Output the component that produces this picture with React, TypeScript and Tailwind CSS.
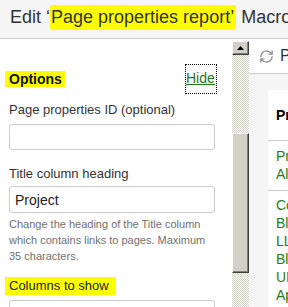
import { RefreshCw } from "lucide-react";

function Checker({ className }: { className: string }) {
  return (
    <div
      className={`bg-[repeating-conic-gradient(#d4d0c8_0_25%,#ffffff_0_50%)] bg-[length:2px_2px] ${className}`}
    />
  );
}

export default function App() {
  return (
    <div className="w-[288px] h-[307px] overflow-hidden bg-white font-['Liberation_Sans',Arial,sans-serif] text-[#333333]">
      <div className="h-[39px] border-b border-[#cccccc] bg-[#f5f5f5] pl-[10px] pt-[7px] text-[18px] leading-[20px] whitespace-nowrap overflow-hidden">
        Edit ‘
        <span className="bg-[#ffff00] pt-[2px] pb-[3px] pl-[1px] pr-[2px] rounded-[2px]">
          Page properties report’
        </span>{" "}
        Macro
      </div>
      <div className="flex h-[268px]">
        <div className="w-[232px] shrink-0 pl-[9px]">
          <div className="flex justify-between items-start mt-[25px] pr-[15px]">
            <div className="mt-[7px] -ml-[4px] w-fit pl-[4px] pr-[3px] bg-[#ffff00] text-[14px] leading-[16px] font-bold text-[#111111]">
              Options
            </div>
            <div className="w-[32px] h-[30px] border border-dotted border-black pt-[5px] text-[14px] leading-[16px] text-[#1f7a1a] underline">
              Hide
            </div>
          </div>
          <div className="mt-[8px] text-[13px] leading-[16px]">Page properties ID (optional)</div>
          <div className="mt-[6px] h-[26px] w-[206px] border border-[#cccccc] rounded-[3px] bg-white" />
          <div className="mt-[16px] text-[13px] leading-[16px]">Title column heading</div>
          <div className="mt-[4px] h-[27px] w-[206px] border border-[#cccccc] rounded-[3px] bg-white pl-[5px] pt-[5px] text-[14px] leading-[16px] text-[#222222]">
            Project
          </div>
          <div className="mt-[3px] text-[11px] leading-[16px] text-[#707070] whitespace-nowrap">
            Change the heading of the Title column
            <br />
            which contains links to pages. Maximum
            <br />
            35 characters.
          </div>
          <div className="mt-[13px] -ml-[4px] w-fit pl-[4px] pr-[7px] bg-[#ffff00] text-[13px] leading-[18px] text-[#222222]">
            Columns to show
          </div>
          <div className="mt-[5px] h-[26px] w-[206px] border border-[#cccccc] rounded-[3px] bg-white" />
        </div>
        <div className="w-[17px] shrink-0 flex flex-col pt-[2px]">
          <div className="h-[14px] bg-[#d4d0c8] border border-t-white border-l-white border-r-[#404040] border-b-[#404040] shadow-[inset_-1px_-1px_#808080] flex items-center justify-center">
            <svg width="7" height="4" viewBox="0 0 7 4">
              <polygon points="3.5,0 7,4 0,4" fill="#000000" />
            </svg>
          </div>
          <Checker className="h-[78px]" />
          <div className="h-[140px] bg-[#d4d0c8] border border-t-white border-l-white border-r-[#404040] border-b-[#404040] shadow-[inset_-1px_-1px_#808080]" />
          <Checker className="flex-1" />
        </div>
        <div className="flex-1 min-w-0 flex flex-col bg-[#f5f5f5] overflow-hidden">
          <div className="h-[35px] shrink-0 bg-white border-b border-[#cccccc] flex items-center pl-[10px] gap-[6px] whitespace-nowrap">
            <RefreshCw size={15} color="#8c8c8c" strokeWidth={2} className="shrink-0" />
            <span className="text-[16px] text-[#333333]">Preview</span>
          </div>
          <div className="ml-[19px] mt-[16px] flex-1 bg-white text-[14px] leading-[18px] whitespace-nowrap overflow-hidden">
            <div className="pt-[16px] pb-[16px] pl-[8px] font-bold text-black border-b border-[#cccccc]">
              Project
            </div>
            <div className="pt-[6px] pb-[7px] pl-[8px] text-[#2a7a1a] border-b border-[#cccccc]">
              <div>Project</div>
              <div>Alpha</div>
            </div>
            <div className="pt-[5px] pl-[8px] text-[#2a7a1a]">
              <div>Core</div>
              <div>Blog</div>
              <div>LLama</div>
              <div>Blue</div>
              <div>UI</div>
              <div>Apps</div>
            </div>
          </div>
        </div>
      </div>
    </div>
  );
}
